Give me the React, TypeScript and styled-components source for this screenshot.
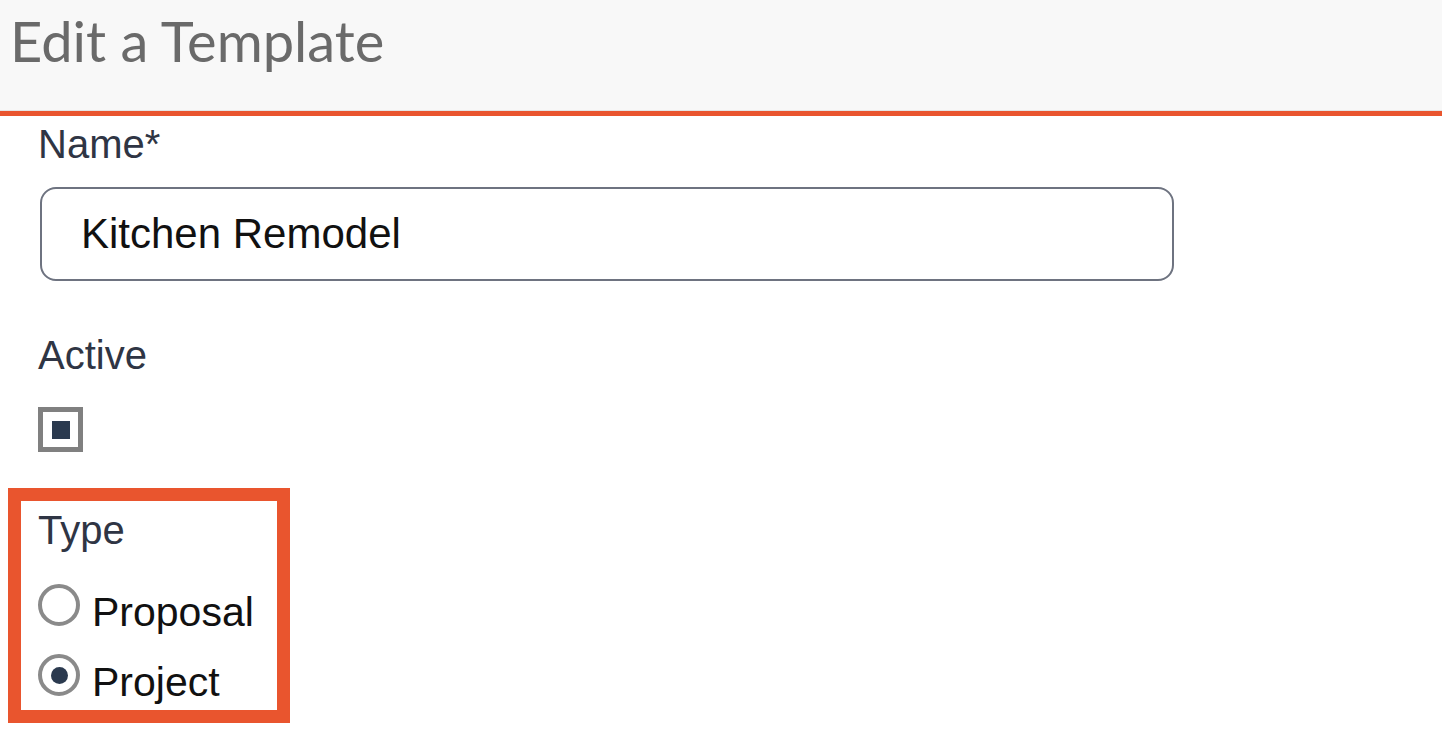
import React from "react";
import styled, { createGlobalStyle } from "styled-components";

const GlobalStyle = createGlobalStyle`
  html, body {
    margin: 0;
    padding: 0;
    background: #ffffff;
  }
  body {
    font-family: "Liberation Sans", Arial, sans-serif;
  }
`;

const Page = styled.div`
  width: 1442px;
  min-height: 742px;
  overflow: hidden;
`;

const Header = styled.header`
  height: 116px;
  box-sizing: border-box;
  padding: 12px 0 0 10px;
  background: #f8f8f8;
  border-bottom: 5px solid #e9552e;
  box-shadow: inset 0 -1px 0 #e4e4e4;
`;

const Title = styled.h1`
  margin: 0;
  font-family: Lato, "Open Sans", sans-serif;
  font-weight: 400;
  font-size: 56px;
  line-height: 58px;
  color: #6a6a6a;
`;

const Form = styled.form`
  display: flex;
  flex-direction: column;
  align-items: flex-start;
  padding: 4px 0 0 38px;
`;

const Label = styled.label<{ $gap?: number }>`
  display: block;
  font-size: 40px;
  line-height: 48px;
  color: #2f3544;
  margin-bottom: ${(p) => p.$gap ?? 0}px;
`;

const TextInput = styled.input`
  width: 1134px;
  height: 94px;
  margin-left: 2px;
  box-sizing: border-box;
  padding: 0 0 0 39px;
  border: 2px solid #6e7380;
  border-radius: 16px;
  font-family: "Liberation Sans", Arial, sans-serif;
  font-size: 42px;
  color: #111111;
  background: #ffffff;
  outline: none;
  margin-bottom: 50px;
`;

const CheckBox = styled.span<{ $checked?: boolean }>`
  display: flex;
  align-items: center;
  justify-content: center;
  width: 45px;
  height: 45px;
  box-sizing: border-box;
  border: 5px solid #808080;
  background: #ffffff;
  margin-bottom: 36px;

  &::after {
    content: "";
    width: 18px;
    height: 18px;
    background: ${(p) => (p.$checked ? "#2b3a4f" : "transparent")};
  }
`;

const Highlight = styled.fieldset`
  margin: 0 0 0 -30px;
  width: 282px;
  height: 235px;
  box-sizing: border-box;
  border: 13px solid #e9552e;
  padding: 5px 0 0 17px;
  display: flex;
  flex-direction: column;
`;

const RadioRow = styled.label<{ $first?: boolean }>`
  display: flex;
  align-items: flex-start;
  gap: 12px;
  height: 70px;
  margin-top: ${(p) => (p.$first ? 23 : 0)}px;
  font-size: 41px;
  line-height: 70px;
  color: #111111;
`;

const Radio = styled.span<{ $checked?: boolean }>`
  display: flex;
  align-items: center;
  justify-content: center;
  flex: none;
  width: 42px;
  height: 42px;
  margin-top: 7px;
  box-sizing: border-box;
  border: 4px solid #8a8a8a;
  border-radius: 50%;
  background: #ffffff;

  &::after {
    content: "";
    width: 17px;
    height: 17px;
    border-radius: 50%;
    background: ${(p) => (p.$checked ? "#2b3a4f" : "transparent")};
  }
`;

const types = [
  { key: "proposal", label: "Proposal", checked: false },
  { key: "project", label: "Project", checked: true },
];

export default function App() {
  return (
    <Page>
      <GlobalStyle />
      <Header>
        <Title>Edit a Template</Title>
      </Header>
      <Form>
        <Label $gap={19}>Name*</Label>
        <TextInput defaultValue="Kitchen Remodel" />
        <Label $gap={28}>Active</Label>
        <CheckBox $checked />
        <Highlight>
          <Label>Type</Label>
          {types.map((t, i) => (
            <RadioRow key={t.key} $first={i === 0}>
              <Radio $checked={t.checked} />
              {t.label}
            </RadioRow>
          ))}
        </Highlight>
      </Form>
    </Page>
  );
}
